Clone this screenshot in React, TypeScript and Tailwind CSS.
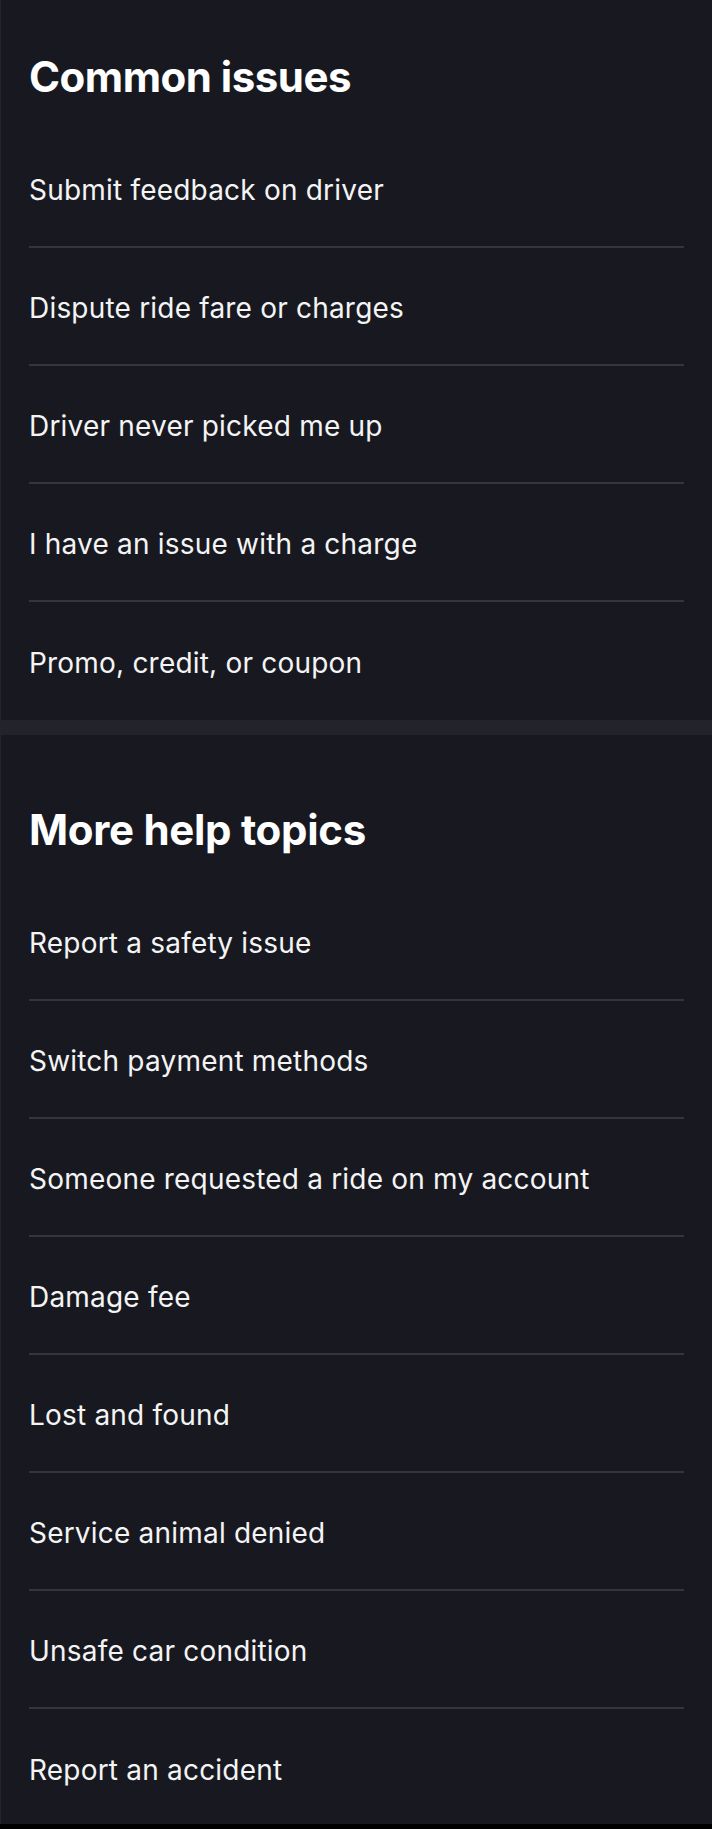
const commonIssues = [
  'Submit feedback on driver',
  'Dispute ride fare or charges',
  'Driver never picked me up',
  'I have an issue with a charge',
  'Promo, credit, or coupon',
]

const moreTopics = [
  'Report a safety issue',
  'Switch payment methods',
  'Someone requested a ride on my account',
  'Damage fee',
  'Lost and found',
  'Service animal denied',
  'Unsafe car condition',
  'Report an accident',
]

const TopicList = ({ items }: { items: string[] }) => (
  <ul className="px-[28px]">
    {items.map((item, index) => (
      <li
        key={item}
        className={`flex h-[118px] items-center pt-[3px] ${index < items.length - 1 ? 'border-b-2 border-[#35363c]' : ''}`}
      >
        <a href="#" className="text-[28px] leading-none tracking-[0.2px] text-[#f4f4f5]">
          {item}
        </a>
      </li>
    ))}
  </ul>
)

export default function App() {
  return (
    <div className="h-[1829px] w-full overflow-hidden bg-black" style={{ fontFamily: 'Inter, "Noto Sans", sans-serif' }}>
      <div className="h-[1824px] border-l border-[#24252b] bg-[#181920]">
        {/* Common issues */}
        <section>
          <h2 className="flex h-[130px] items-center px-[28px] pt-[24px] text-[42px] font-bold leading-none tracking-[-0.5px] text-white">
            Common issues
          </h2>
          <TopicList items={commonIssues} />
        </section>

        <div className="h-[15px] bg-[#232429]" />

        {/* More help topics */}
        <section>
          <h2 className="flex h-[148px] items-center px-[28px] pt-[42px] text-[42px] font-bold leading-none tracking-[-0.3px] text-white">
            More help topics
          </h2>
          <TopicList items={moreTopics} />
        </section>
      </div>
    </div>
  )
}
